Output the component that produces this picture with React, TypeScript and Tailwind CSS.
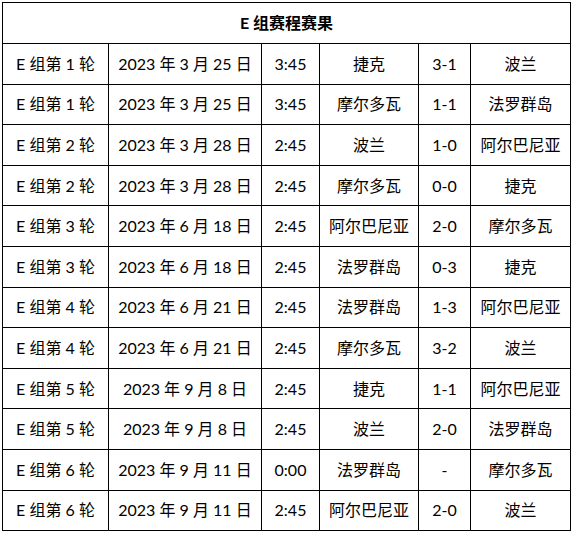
const ROWS = [
  ['E 组第 1 轮', '2023 年 3 月 25 日', '3:45', '捷克', '3-1', '波兰'],
  ['E 组第 1 轮', '2023 年 3 月 25 日', '3:45', '摩尔多瓦', '1-1', '法罗群岛'],
  ['E 组第 2 轮', '2023 年 3 月 28 日', '2:45', '波兰', '1-0', '阿尔巴尼亚'],
  ['E 组第 2 轮', '2023 年 3 月 28 日', '2:45', '摩尔多瓦', '0-0', '捷克'],
  ['E 组第 3 轮', '2023 年 6 月 18 日', '2:45', '阿尔巴尼亚', '2-0', '摩尔多瓦'],
  ['E 组第 3 轮', '2023 年 6 月 18 日', '2:45', '法罗群岛', '0-3', '捷克'],
  ['E 组第 4 轮', '2023 年 6 月 21 日', '2:45', '法罗群岛', '1-3', '阿尔巴尼亚'],
  ['E 组第 4 轮', '2023 年 6 月 21 日', '2:45', '摩尔多瓦', '3-2', '波兰'],
  ['E 组第 5 轮', '2023 年 9 月 8 日', '2:45', '捷克', '1-1', '阿尔巴尼亚'],
  ['E 组第 5 轮', '2023 年 9 月 8 日', '2:45', '波兰', '2-0', '法罗群岛'],
  ['E 组第 6 轮', '2023 年 9 月 11 日', '0:00', '法罗群岛', '-', '摩尔多瓦'],
  ['E 组第 6 轮', '2023 年 9 月 11 日', '2:45', '阿尔巴尼亚', '2-0', '波兰'],
]

const WIDTHS = ['w-[106px]', 'w-[153px]', 'w-[58px]', 'w-[99px]', 'w-[52px]', 'w-[100px]']

export default function App() {
  return (
    <div className="bg-white w-[573px] h-[536px] pt-[2px] pl-[2px] font-['Lato','Noto_Sans_CJK_SC',sans-serif] text-[16px] text-black">
      <table className="border-collapse table-fixed w-[569px]">
        <colgroup>
          {WIDTHS.map((w, i) => (
            <col key={i} className={w} />
          ))}
        </colgroup>
        <tbody>
          <tr className="h-[41px]">
            <td colSpan={6} className="border border-black text-center font-bold">
              E 组赛程赛果
            </td>
          </tr>
          {ROWS.map((r, i) => (
            <tr key={i} className="h-[40.6px]">
              {r.map((c, j) => (
                <td key={j} className="border border-black text-center p-0 whitespace-nowrap">
                  {c}
                </td>
              ))}
            </tr>
          ))}
        </tbody>
      </table>
    </div>
  )
}
